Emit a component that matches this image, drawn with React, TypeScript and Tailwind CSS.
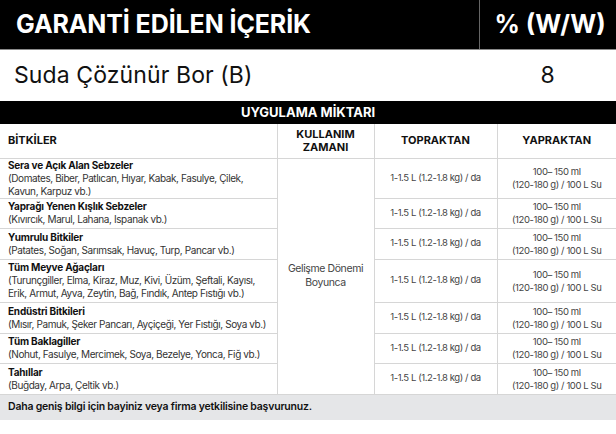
import React from "react";

const rows = [
  { t: "Sera ve Açık Alan Sebzeler", d: "(Domates, Biber, Patlıcan, Hıyar, Kabak, Fasulye, Çilek, Kavun, Karpuz vb.)", h: "h-[40px]" },
  { t: "Yaprağı Yenen Kışlık Sebzeler", d: "(Kıvırcık, Marul, Lahana, Ispanak vb.)", h: "h-[30px]" },
  { t: "Yumrulu Bitkiler", d: "(Patates, Soğan, Sarımsak,  Havuç, Turp, Pancar vb.)", h: "h-[31px]" },
  { t: "Tüm Meyve Ağaçları", d: "(Turunçgiller, Elma, Kiraz, Muz, Kivi, Üzüm, Şeftali, Kayısı, Erik, Armut, Ayva, Zeytin, Bağ, Fındık, Antep Fıstığı vb.)", h: "h-[43px]" },
  { t: "Endüstri Bitkileri", d: "(Mısır, Pamuk, Şeker Pancarı, Ayçiçeği, Yer Fıstığı, Soya vb.)", h: "h-[31px]" },
  { t: "Tüm Baklagiller", d: "(Nohut, Fasulye, Mercimek, Soya, Bezelye, Yonca, Fiğ vb.)", h: "h-[30px]" },
  { t: "Tahıllar", d: "(Buğday, Arpa, Çeltik vb.)", h: "h-[31px]" },
];

export default function App() {
  return (
    <div className="w-[616px] h-[434px] bg-white font-['Inter','Liberation_Sans',sans-serif] text-[#111]">
      <div className="flex h-[50px] bg-black border-b border-[#8a8a8a]">
        <div className="flex-1 flex items-center pl-4 text-white text-[25px] font-bold tracking-[-0.1px]">
          GARANTİ EDİLEN İÇERİK
        </div>
        <div className="w-[137px] border-l border-[#666] flex items-center justify-center pl-[4px] text-white text-[25px] font-bold">
          % (W/W)
        </div>
      </div>
      <div className="flex h-[51px]">
        <div className="flex-1 flex items-center pl-[14px] text-[23px] tracking-[0.1px]">Suda Çözünür Bor (B)</div>
        <div className="w-[137px] flex items-center justify-center text-[23px]">8</div>
      </div>
      <div className="h-[23px] bg-black text-white text-[13px] font-bold flex items-center justify-center">
        UYGULAMA MİKTARI
      </div>
      <table className="w-[616px] table-fixed border-collapse">
        <colgroup>
          <col className="w-[277px]" />
          <col className="w-[97px]" />
          <col className="w-[123px]" />
          <col className="w-[119px]" />
        </colgroup>
        <thead>
          <tr className="h-[34px] text-[11px] font-bold leading-[13px]">
            <th className="text-left pl-2 border-b border-r border-[#d6d6d6]">BİTKİLER</th>
            <th className="text-center border border-t-0 border-[#d6d6d6]">KULLANIM<br />ZAMANI</th>
            <th className="text-center border border-t-0 border-[#d6d6d6]">TOPRAKTAN</th>
            <th className="text-center border-b border-l border-[#d6d6d6]">YAPRAKTAN</th>
          </tr>
        </thead>
        <tbody>
          {rows.map((r, i) => (
            <tr key={i} className={r.h}>
              <td className="p-0 pl-2 pr-1 border-b border-r border-[#d6d6d6] text-[10px] leading-[13px] align-middle">
                <div className="font-bold text-[#111] tracking-[-0.2px]">{r.t}</div>
                <div className="text-[#333] tracking-[-0.4px]">{r.d}</div>
              </td>
              {i === 0 && (
                <td rowSpan={7} className="p-0 text-center text-[10.5px] leading-[14px] tracking-[-0.4px] text-[#444] border border-t-0 border-[#d6d6d6] align-middle">
                  Gelişme Dönemi<br />Boyunca
                </td>
              )}
              <td className="p-0 text-center text-[9.5px] tracking-[-0.4px] text-[#444] border border-t-0 border-[#d6d6d6]">
                1-1.5 L (1.2-1.8 kg) / da
              </td>
              <td className="p-0 text-center text-[9.5px] leading-[13px] tracking-[-0.4px] text-[#444] border-b border-l border-[#d6d6d6]">
                100– 150 ml
                <br />
                (120-180 g) / 100 L Su
              </td>
            </tr>
          ))}
        </tbody>
      </table>
      <div className="h-[25px] bg-[#e5e6e8] flex items-center pl-2 text-[10.5px] font-semibold tracking-[-0.2px] text-[#111]">
        Daha geniş bilgi için bayiniz veya firma yetkilisine başvurunuz.
      </div>
    </div>
  );
}
